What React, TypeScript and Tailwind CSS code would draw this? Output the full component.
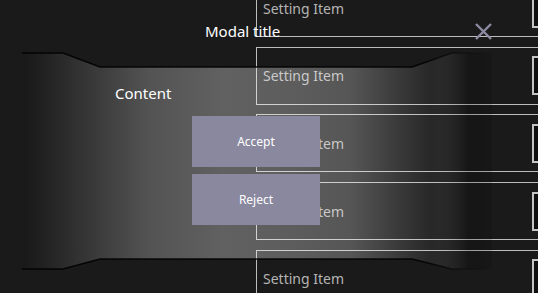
const ITEMS = [0, 1, 2, 3, 4];

function SettingRow() {
  return (
    <div className="flex h-[58px] w-[340px] shrink-0 items-center border border-[#bdbdbd] pl-[6px]">
      <span className="w-[269px] text-[14px] text-[#b4b4b4]">Setting Item</span>
      <div className="h-[39px] w-[50px] border-2 border-[#c4c4c4] bg-[#0f0f0f]" />
    </div>
  );
}

function CloseIcon() {
  return (
    <svg width="17" height="17" viewBox="0 0 17 17" className="text-[#8d8ba3]">
      <path d="M1 1 L16 16 M16 1 L1 16" stroke="currentColor" strokeWidth="2.4" strokeLinecap="butt" />
    </svg>
  );
}

function PanelShape() {
  const top = "22,53 63,53 100,67 412,67 452,53 492,53";
  const bottom = "22,269 63,269 100,259 412,259 452,269 492,269";
  return (
    <svg className="absolute inset-0" width="538" height="293" viewBox="0 0 538 293">
      <defs>
        <linearGradient id="panelFill" gradientUnits="userSpaceOnUse" x1="22" y1="0" x2="492" y2="0">
          <stop offset="0" stopColor="#000000" stopOpacity="0.05" />
          <stop offset="0.08" stopColor="#ffffff" stopOpacity="0.066" />
          <stop offset="0.166" stopColor="#ffffff" stopOpacity="0.15" />
          <stop offset="0.27" stopColor="#ffffff" stopOpacity="0.25" />
          <stop offset="0.43" stopColor="#ffffff" stopOpacity="0.31" />
          <stop offset="0.59" stopColor="#ffffff" stopOpacity="0.29" />
          <stop offset="0.7" stopColor="#ffffff" stopOpacity="0.26" />
          <stop offset="0.8" stopColor="#ffffff" stopOpacity="0.14" />
          <stop offset="0.87" stopColor="#ffffff" stopOpacity="0.06" />
          <stop offset="0.95" stopColor="#000000" stopOpacity="0.18" />
          <stop offset="1" stopColor="#000000" stopOpacity="0.12" />
        </linearGradient>
        <linearGradient id="edgeFade" gradientUnits="userSpaceOnUse" x1="22" y1="0" x2="492" y2="0">
          <stop offset="0" stopColor="#000" stopOpacity="0.9" />
          <stop offset="0.85" stopColor="#000" stopOpacity="0.9" />
          <stop offset="1" stopColor="#000" stopOpacity="0" />
        </linearGradient>
      </defs>
      <polygon
        points="22,53 63,53 100,67 412,67 452,53 492,53 492,269 452,269 412,259 100,259 63,269 22,269"
        fill="url(#panelFill)"
      />
      <polyline points={top} fill="none" stroke="url(#edgeFade)" strokeWidth="1.6" />
      <polyline points={bottom} fill="none" stroke="url(#edgeFade)" strokeWidth="1.6" />
    </svg>
  );
}

export default function App() {
  return (
    <div
      className="relative h-[293px] w-[538px] overflow-hidden bg-[#1a1a1a]"
      style={{ fontFamily: '"Noto Sans", "Open Sans", sans-serif' }}
    >
      <div className="mt-[-21px] flex flex-col gap-[9.7px] pl-[256px]">
        {ITEMS.map((i) => (
          <SettingRow key={i} />
        ))}
      </div>

      <div className="absolute inset-0">
        <PanelShape />
        <div className="relative flex h-full flex-col">
          <div className="flex h-[62px] items-start pt-[20px]">
            <span className="ml-[205px] text-[15px] leading-[22px] text-white">Modal title</span>
            <div className="ml-[195px] mt-[3px]">
              <CloseIcon />
            </div>
          </div>
          <div className="ml-[115px] mt-[20px] text-[15px] leading-[22px] text-white">Content</div>
          <div className="ml-[192px] mt-[12px] flex w-[128px] flex-col gap-[7px]">
            <button className="h-[51px] bg-[#8a889f] pt-[1px] text-[12px] text-white">Accept</button>
            <button className="h-[51px] bg-[#8a889f] pt-[1px] text-[12px] text-white">Reject</button>
          </div>
        </div>
      </div>
    </div>
  );
}
